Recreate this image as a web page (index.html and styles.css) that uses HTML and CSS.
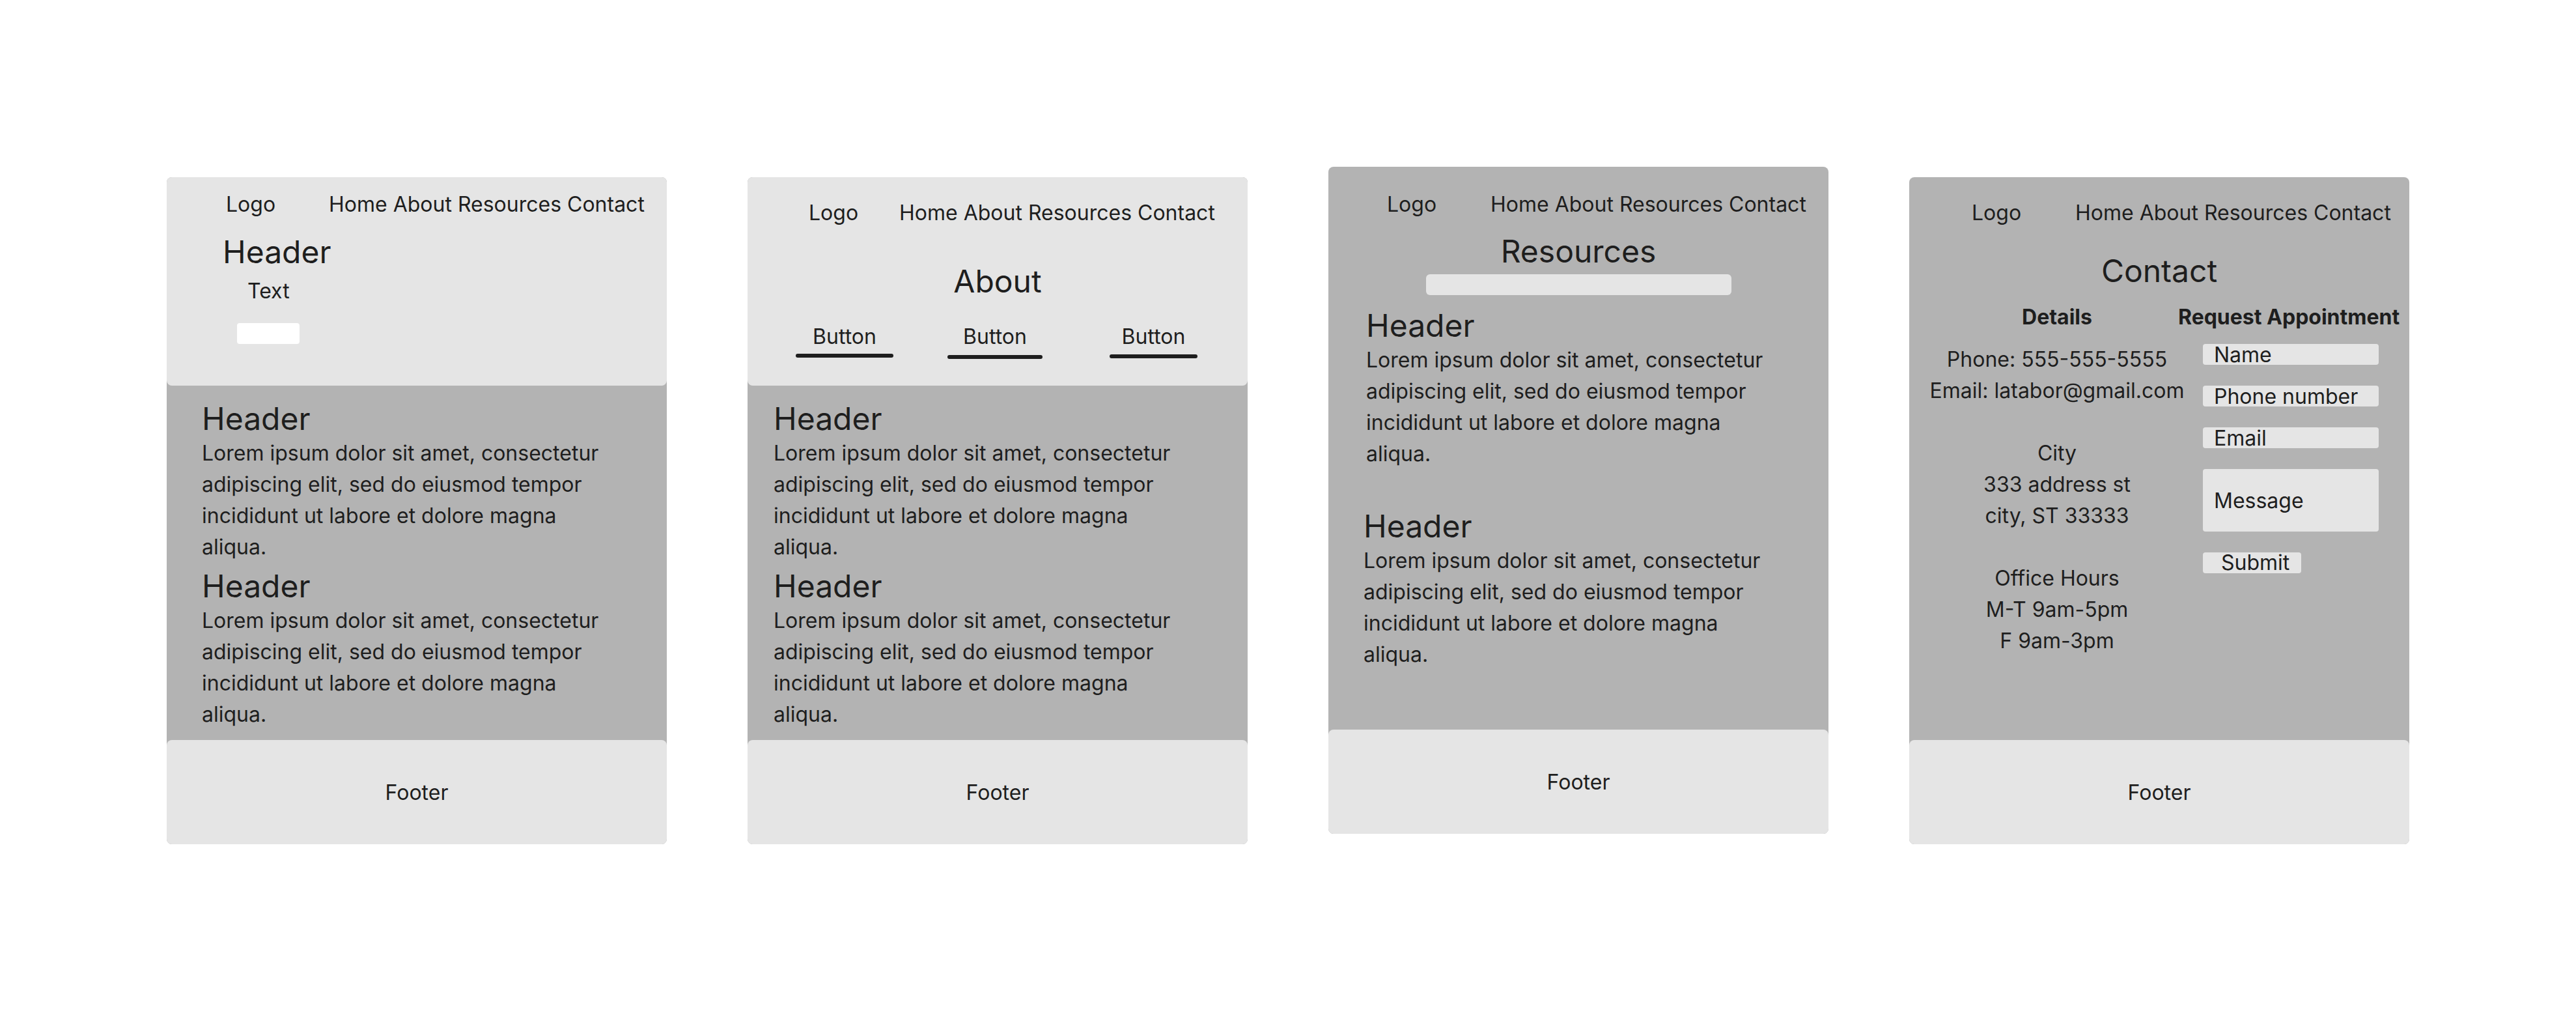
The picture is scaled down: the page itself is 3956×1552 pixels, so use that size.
FILE: index.html
```html
<!DOCTYPE html>
<html lang="en">
<head>
<meta charset="utf-8">
<title>Wireframes - Home, About, Resources, Contact</title>
<link rel="stylesheet" href="styles.css">
</head>
<body>

<main class="boards">

  <!-- Home -->
  <section class="card card--home">
    <header class="card-head card-head--light">
      <nav class="topnav">
        <span class="logo">Logo</span>
        <span class="links"><a href="#">Home</a> <a href="#">About</a> <a href="#">Resources</a> <a href="#">Contact</a></span>
      </nav>
      <h1 class="hero-title">Header</h1>
      <p class="hero-text">Text</p>
      <span class="hero-btn"></span>
    </header>
    <div class="card-body">
      <article class="block">
        <h2>Header</h2>
        <p>Lorem ipsum dolor sit amet, consectetur adipiscing elit, sed do eiusmod tempor incididunt ut labore et dolore magna aliqua.</p>
      </article>
      <article class="block">
        <h2>Header</h2>
        <p>Lorem ipsum dolor sit amet, consectetur adipiscing elit, sed do eiusmod tempor incididunt ut labore et dolore magna aliqua.</p>
      </article>
    </div>
    <footer class="card-foot">Footer</footer>
  </section>

  <!-- About -->
  <section class="card card--about">
    <header class="card-head card-head--light">
      <nav class="topnav">
        <span class="logo">Logo</span>
        <span class="links"><a href="#">Home</a> <a href="#">About</a> <a href="#">Resources</a> <a href="#">Contact</a></span>
      </nav>
      <h1 class="page-title">About</h1>
      <div class="tabs">
        <a class="tab tab--1" href="#">Button</a>
        <a class="tab tab--2" href="#">Button</a>
        <a class="tab tab--3" href="#">Button</a>
      </div>
    </header>
    <div class="card-body">
      <article class="block">
        <h2>Header</h2>
        <p>Lorem ipsum dolor sit amet, consectetur adipiscing elit, sed do eiusmod tempor incididunt ut labore et dolore magna aliqua.</p>
      </article>
      <article class="block">
        <h2>Header</h2>
        <p>Lorem ipsum dolor sit amet, consectetur adipiscing elit, sed do eiusmod tempor incididunt ut labore et dolore magna aliqua.</p>
      </article>
    </div>
    <footer class="card-foot">Footer</footer>
  </section>

  <!-- Resources -->
  <section class="card card--resources">
    <header class="card-head">
      <nav class="topnav">
        <span class="logo">Logo</span>
        <span class="links"><a href="#">Home</a> <a href="#">About</a> <a href="#">Resources</a> <a href="#">Contact</a></span>
      </nav>
      <h1 class="page-title">Resources</h1>
      <div class="search-bar"></div>
    </header>
    <div class="card-body">
      <article class="block">
        <h2>Header</h2>
        <p>Lorem ipsum dolor sit amet, consectetur adipiscing elit, sed do eiusmod tempor incididunt ut labore et dolore magna aliqua.</p>
      </article>
      <article class="block block--spaced">
        <h2>Header</h2>
        <p>Lorem ipsum dolor sit amet, consectetur adipiscing elit, sed do eiusmod tempor incididunt ut labore et dolore magna aliqua.</p>
      </article>
    </div>
    <footer class="card-foot">Footer</footer>
  </section>

  <!-- Contact -->
  <section class="card card--contact">
    <header class="card-head">
      <nav class="topnav">
        <span class="logo">Logo</span>
        <span class="links"><a href="#">Home</a> <a href="#">About</a> <a href="#">Resources</a> <a href="#">Contact</a></span>
      </nav>
      <h1 class="page-title">Contact</h1>
    </header>
    <div class="card-body contact">
      <div class="details">
        <h3>Details</h3>
        <p>Phone: 555-555-5555<br>Email: latabor@gmail.com</p>
        <p>City<br>333 address st<br>city, ST 33333</p>
        <p>Office Hours<br>M-T 9am-5pm<br>F 9am-3pm</p>
      </div>
      <form class="appointment" onsubmit="return false;">
        <h3>Request Appointment</h3>
        <input class="field" type="text" name="name" placeholder="Name">
        <input class="field" type="text" name="phone" placeholder="Phone number">
        <input class="field" type="text" name="email" placeholder="Email">
        <textarea class="field field--message" name="message" placeholder="Message"></textarea>
        <button class="submit" type="submit">Submit</button>
      </form>
    </div>
    <footer class="card-foot">Footer</footer>
  </section>

</main>

</body>
</html>
```

FILE: styles.css
```css
body {
  margin: 0;
  background: #fff;
  color: #1e1e1e;
  font-family: Inter, "Noto Sans", sans-serif;
}
h1, h2, h3, p {
  margin: 0;
  font-size: inherit;
  font-weight: normal;
}
a {
  color: inherit;
  text-decoration: none;
}

.boards {
  display: flex;
  align-items: flex-start;
  gap: 124px;
  padding: 256px 256px 0;
}

/* one wireframe */
.card {
  flex: none;
  width: 768px;
  height: 1024px;
  margin-top: 16px;
  display: flex;
  flex-direction: column;
  background: #b3b3b3;
  border-radius: 8px;
  font-size: 32px;
  line-height: 39px;
}
.card--resources {
  margin-top: 0;
}
.card-head {
  flex: none;
}
.card-head--light {
  box-sizing: border-box;
  height: 320px;
  background: #e5e5e5;
  border-radius: 8px;
}
.card-body {
  flex: 1;
}
.card-foot {
  flex: none;
  height: 160px;
  display: flex;
  align-items: center;
  justify-content: center;
  background: #e5e5e5;
  border-radius: 8px;
}

/* nav */
.topnav {
  display: flex;
  white-space: nowrap;
}
.topnav .logo {
  flex: none;
}
.card--home .card-head { padding-top: 22px; }
.card--home .topnav { padding-left: 91px; }
.card--home .logo { width: 158px; }
.card--about .card-head { padding-top: 35px; }
.card--about .topnav { padding-left: 94px; }
.card--about .logo { width: 139px; }
.card--resources .card-head { padding-top: 38px; }
.card--resources .topnav { padding-left: 90px; }
.card--resources .logo { width: 159px; }
.card--contact .card-head { padding-top: 35px; }
.card--contact .topnav { padding-left: 96px; }
.card--contact .logo { width: 159px; }

/* titles */
.hero-title,
.page-title,
.block h2 {
  font-size: 48px;
  line-height: 58px;
}
.page-title {
  text-align: center;
}

/* home hero */
.hero-title {
  margin-top: 25px;
  padding-left: 86px;
}
.hero-text {
  margin-top: 11px;
  padding-left: 124px;
}
.hero-btn {
  display: block;
  width: 96px;
  height: 32px;
  margin: 30px 0 0 108px;
  background: #fff;
  border-radius: 4px;
}

/* about tabs */
.card--about .page-title {
  margin-top: 57px;
}
.tabs {
  display: flex;
  margin-top: 36px;
  padding-left: 74px;
}
.tab {
  display: flex;
  flex-direction: column;
  align-items: center;
}
.tab::after {
  content: "";
  display: block;
  width: 100%;
  height: 6px;
  margin-top: 7px;
  background: #1e1e1e;
  border-radius: 3px;
}
.tab--1 { width: 150px; }
.tab--2 { width: 146px; margin-left: 83px; }
.tab--2::after { margin-top: 9px; }
.tab--3 { width: 135px; margin-left: 103px; }
.tab--3::after { margin-top: 8px; }

/* resources */
.card--resources .page-title {
  margin-top: 24px;
}
.search-bar {
  width: 469px;
  height: 32px;
  margin: 6px auto 0;
  background: #e5e5e5;
  border-radius: 6px;
}

/* text sections */
.block p {
  max-width: 640px;
  line-height: 48px;
}
.block + .block {
  margin-top: 7px;
}
.card--home .card-body { padding: 22px 0 0 54px; }
.card--about .card-body { padding: 22px 0 0 40px; }
.card--resources .card-body { padding: 18px 0 0 58px; }
.card--resources .block--spaced {
  margin: 58px 0 0 -4px;
}

/* contact */
.card--contact .page-title {
  margin-top: 41px;
}
.contact {
  display: grid;
  grid-template-columns: 413px 355px;
  align-items: start;
  padding-top: 22px;
}
.contact h3 {
  font-weight: 700;
  white-space: nowrap;
}
.details {
  display: flex;
  flex-direction: column;
  align-items: center;
  padding-left: 41px;
  text-align: center;
  white-space: nowrap;
}
.details h3 {
  margin-bottom: 22px;
}
.details p {
  line-height: 48px;
}
.details p + p {
  margin-top: 48px;
}
.appointment {
  display: flex;
  flex-direction: column;
  align-items: flex-start;
  margin: 0;
}
.appointment h3 {
  margin-bottom: 22px;
}
.field,
.submit {
  box-sizing: border-box;
  margin: 0 0 32px 38px;
  border: 0;
  border-radius: 4px;
  background: #e5e5e5;
  color: #1e1e1e;
  font: inherit;
  outline: none;
}
.field {
  width: 270px;
  height: 32px;
  padding: 0 0 0 17px;
  line-height: 32px;
}
.field::placeholder {
  color: #1e1e1e;
  opacity: 1;
}
.field--message {
  height: 96px;
  padding-top: 29px;
  line-height: 39px;
  resize: none;
  overflow: hidden;
}
.submit {
  width: 151px;
  height: 32px;
  padding: 0 0 0 28px;
  line-height: 32px;
  text-align: left;
}
```
